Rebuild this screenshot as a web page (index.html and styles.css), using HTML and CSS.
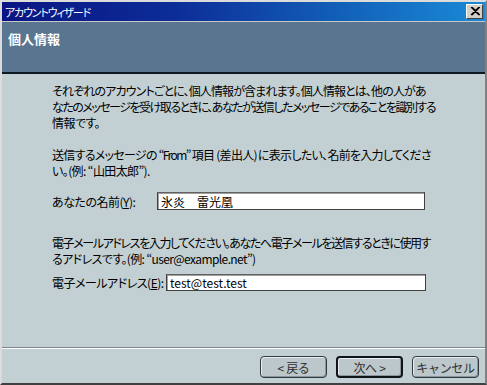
FILE: index.html
```html
<!DOCTYPE html>
<html lang="ja">
<head>
  <meta charset="UTF-8">
  <title>アカウントウィザード</title>
  <link rel="stylesheet" href="styles.css">
</head>
<body>
  <div class="window">
    <div class="titlebar">
      <span class="title">アカウントウィザード</span>
      <span class="close-btn">
        <svg width="10" height="9" viewBox="0 0 10 9"><path d="M1 0 L9 8 M2 0 L10 8 M9 0 L1 8 M10 0 L2 8" stroke="#000" stroke-width="1.2"/></svg>
      </span>
    </div>
    <div class="header">
      <h2>個人情報</h2>
    </div>
    <div class="content">
      <p class="intro">
        <span class="line full w373">それぞれのアカウントごとに、個人情報が含まれます。個人情報とは、他の人があ</span>
        <span class="line full w383">なたのメッセージを受け取るときに、あなたが送信したメッセージであることを識別する</span>
        <span class="line">情報です。</span>
      </p>
      <p class="hint">
        <span class="line full w378">送信するメッセージの “From” 項目 (差出人) に表示したい、名前を入力してくださ</span>
        <span class="line">い。(例: “山田太郎”).</span>
      </p>
      <div class="field field-name">
        <label for="name" class="label-name">あなたの名前(<u>Y</u>):</label>
        <input type="text" id="name" class="input-name" value="氷炎　雷光凰">
      </div>
      <p class="hint mail-hint">
        <span class="line full w378">電子メールアドレスを入力してください。あなたへ電子メールを送信するときに使用す</span>
        <span class="line">るアドレスです。(例: “user@example.net”)</span>
      </p>
      <div class="field field-mail">
        <label for="email" class="label-mail">電子メールアドレス(<u>E</u>):</label>
        <input type="text" id="email" class="input-mail" value="test@test.test">
      </div>
    </div>
    <div class="footer">
      <button class="btn">&lt; 戻る</button>
      <button class="btn btn-default">次へ &gt;</button>
      <button class="btn">キャンセル</button>
    </div>
  </div>
</body>
</html>
```

FILE: styles.css
```css
html, body {
  margin: 0;
  padding: 0;
  width: 487px;
  height: 385px;
  overflow: hidden;
  font-family: "Noto Sans CJK JP", "Noto Sans", sans-serif;
  font-size: 12px;
  font-feature-settings: "palt";
  color: #000;
}
.window {
  width: 487px;
  height: 385px;
  box-sizing: border-box;
  border-top: 2px solid #dcdcdc;
  border-left: 2px solid #dcdcdc;
  border-right: 2px solid #808080;
  border-bottom: 2px solid #404040;
  background: #c3d0d3;
  display: flex;
  flex-direction: column;
}
.titlebar {
  height: 19px;
  flex-shrink: 0;
  background: linear-gradient(90deg, #0a1583 0%, #0c2c96 35%, #1260b8 70%, #1a8ad6 100%);
  display: flex;
  align-items: center;
  justify-content: space-between;
  padding: 0 2px 0 3px;
  border-bottom: 1px solid #c8c8c8;
}
.title {
  color: #fff;
  font-size: 11px;
  letter-spacing: -1.2px;
}
.close-btn {
  width: 17px;
  height: 15px;
  box-sizing: border-box;
  background: #d4d0c8;
  border-top: 1px solid #fff;
  border-left: 1px solid #fff;
  border-right: 1px solid #404040;
  border-bottom: 1px solid #404040;
  display: flex;
  align-items: center;
  justify-content: center;
}
.header {
  height: 50px;
  flex-shrink: 0;
  background: #5a7590;
  border-bottom: 2px solid #0e1822;
  padding: 0 6px;
}
.header h2 {
  margin: 9px 0 0;
  color: #fff;
  font-size: 13px;
  font-weight: bold;
  line-height: 16px;
}
.content {
  flex: 1;
  padding: 9px 0 0 50px;
}
.content p {
  margin: 0;
  line-height: 16px;
}
.line {
  display: block;
  white-space: nowrap;
  letter-spacing: -0.6px;
}
.line.full {
  letter-spacing: -1.6px;
  text-align: justify;
  text-align-last: justify;
  white-space: normal;
}
.w373 { width: 373px; }
.w383 { width: 383px; }
.w378 { width: 378px; }
.hint {
  margin-top: 16px !important;
}
.mail-hint {
  margin-top: 25px !important;
}
.field {
  display: flex;
  align-items: center;
}
.field-name {
  margin-top: 13px;
}
.field-mail {
  margin-top: 7px;
}
.field label {
  letter-spacing: -0.5px;
}
.label-name {
  width: 105px;
}
.label-mail {
  width: 114px;
}
.field input {
  height: 18px;
  box-sizing: border-box;
  border: 1px solid #404040;
  border-top-color: #606060;
  box-shadow: inset 1px 1px 0 #a0a0a0;
  background: #fff;
  font-family: inherit;
  font-size: 12px;
  padding: 0 3px;
  outline: none;
}
.input-name {
  width: 268px;
}
.input-mail {
  width: 260px;
  height: 17px !important;
}
.footer {
  height: 36px;
  box-sizing: border-box;
  flex-shrink: 0;
  border-top: 1px solid #7c8690;
  box-shadow: inset 0 1px 0 #fff;
  display: flex;
  justify-content: flex-end;
  align-items: flex-start;
  gap: 9px;
  padding: 8px 6px 0 0;
}
.btn {
  width: 67px;
  height: 22px;
  box-sizing: border-box;
  background: #bcc7cb;
  border: 1px solid #303840;
  border-radius: 4px;
  box-shadow: inset 1px 1px 0 #e8eef0, inset -1px -1px 0 #8a969c;
  font-family: inherit;
  font-size: 12px;
  color: #303030;
  padding: 0;
  letter-spacing: -0.3px;
}
.btn-default {
  border: 2px solid #101418;
}
```
